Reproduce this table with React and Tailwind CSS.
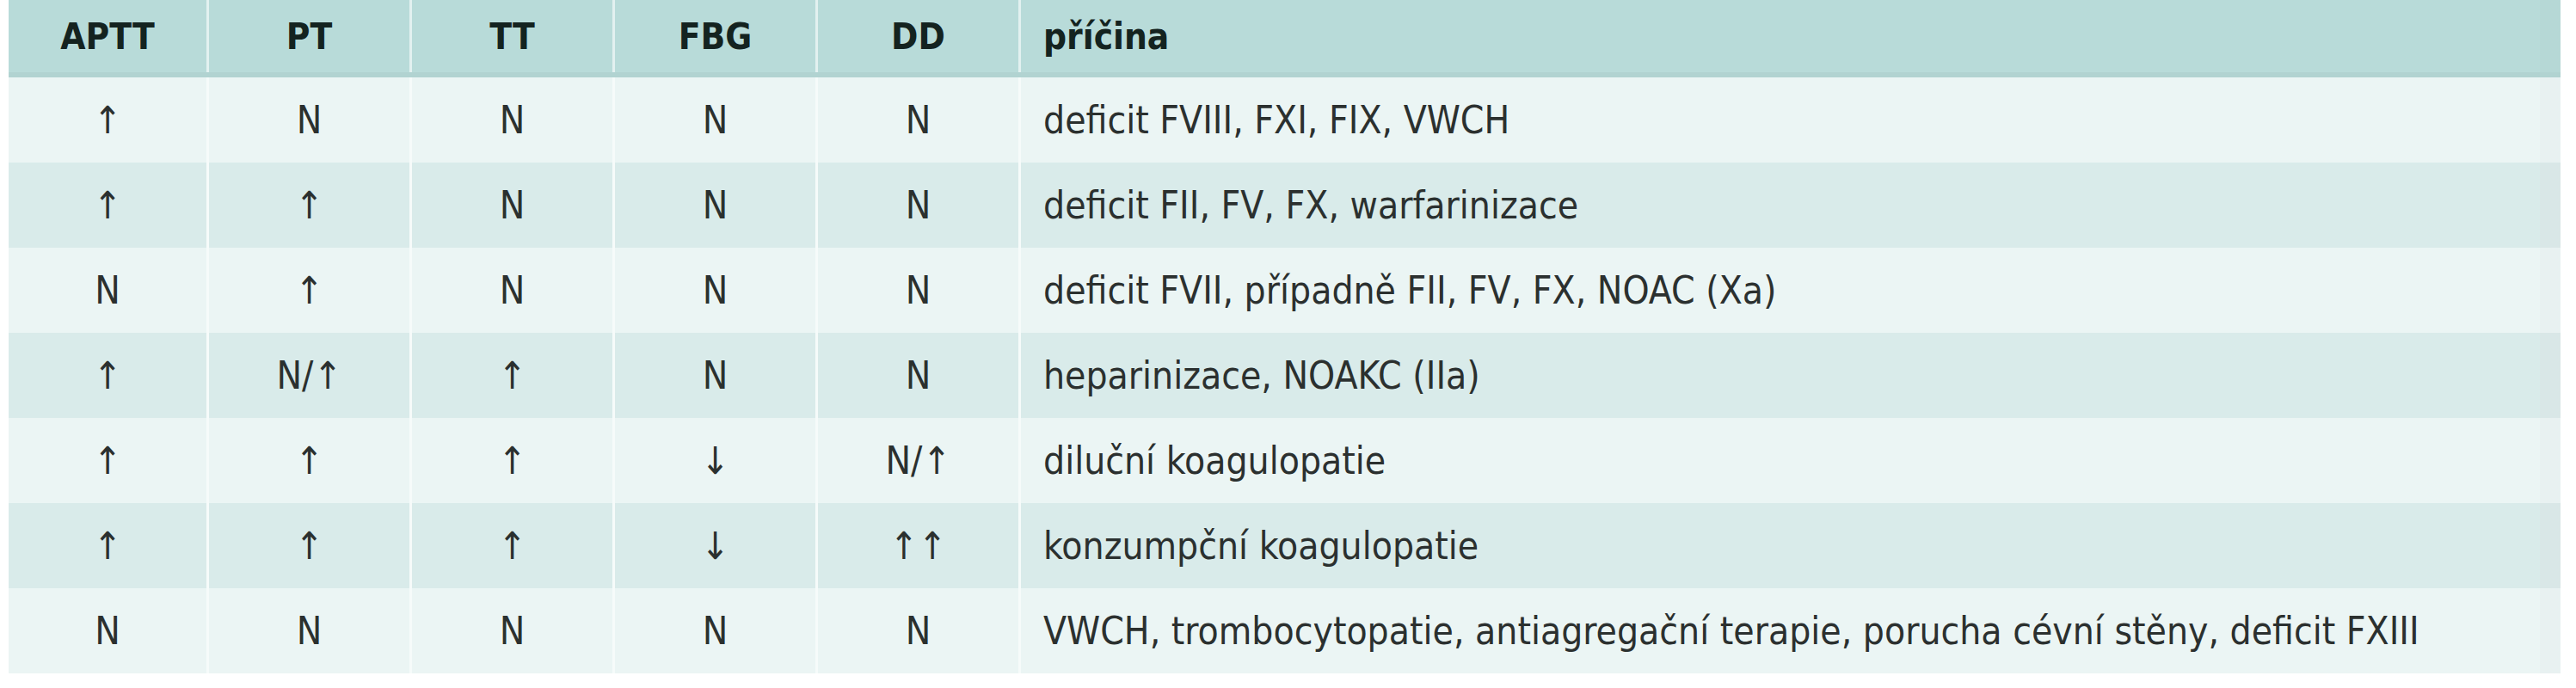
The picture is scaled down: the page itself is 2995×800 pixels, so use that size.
import React from "react";

const rows = [
  ["↑", "N", "N", "N", "N", "deficit FVIII, FXI, FIX, VWCH"],
  ["↑", "↑", "N", "N", "N", "deficit FII, FV, FX, warfarinizace"],
  ["N", "↑", "N", "N", "N", "deficit FVII, případně FII, FV, FX, NOAC (Xa)"],
  ["↑", "N/↑", "↑", "N", "N", "heparinizace, NOAKC (IIa)"],
  ["↑", "↑", "↑", "↓", "N/↑", "diluční koagulopatie"],
  ["↑", "↑", "↑", "↓", "↑↑", "konzumpční koagulopatie"],
  ["N", "N", "N", "N", "N", "VWCH, trombocytopatie, antiagregační terapie, porucha cévní stěny, deficit FXIII"],
];

const heads = ["APTT", "PT", "TT", "FBG", "DD"];

export default function App() {
  return (
    <div
      className="w-[2995px] h-[800px] bg-white pl-[10px] pr-[18px] font-stretch-condensed"
      style={{ fontFamily: '"DejaVu Sans Condensed", "DejaVu Sans", sans-serif' }}
    >
      <div className="flex flex-col">
        <div className="flex h-[90px] bg-[#b8dbd9] border-b-[6px] border-[#b1d3d1] text-[#142320] font-bold text-[42px]">
          {heads.map((h, i) => (
            <div
              key={h}
              className={`flex items-center justify-center border-r-[3px] border-[#e2f1f0] ${i === 0 ? "w-[233px]" : "w-[236px]"}`}
            >
              {h}
            </div>
          ))}
          <div className="flex-1 flex items-center pl-[26px] border-r-[24px] border-[#b6d8d6]">příčina</div>
        </div>
        {rows.map((r, ri) => (
          <div
            key={ri}
            className={`flex h-[99px] text-[44px] text-[#2b302f] ${ri % 2 === 0 ? "bg-[#ebf5f4]" : "bg-[#d9ebea]"}`}
          >
            {r.slice(0, 5).map((c, ci) => (
              <div
                key={ci}
                className={`flex items-center justify-center border-r-[3px] border-[#f6fbfa] ${ci === 0 ? "w-[233px]" : "w-[236px]"}`}
              >
                {c}
              </div>
            ))}
            <div
              className={`flex-1 flex items-center pl-[26px] border-r-[24px] ${ri % 2 === 0 ? "border-[#e8f1f1]" : "border-[#d9e7e7]"}`}
            >
              {r[5]}
            </div>
          </div>
        ))}
      </div>
    </div>
  );
}
